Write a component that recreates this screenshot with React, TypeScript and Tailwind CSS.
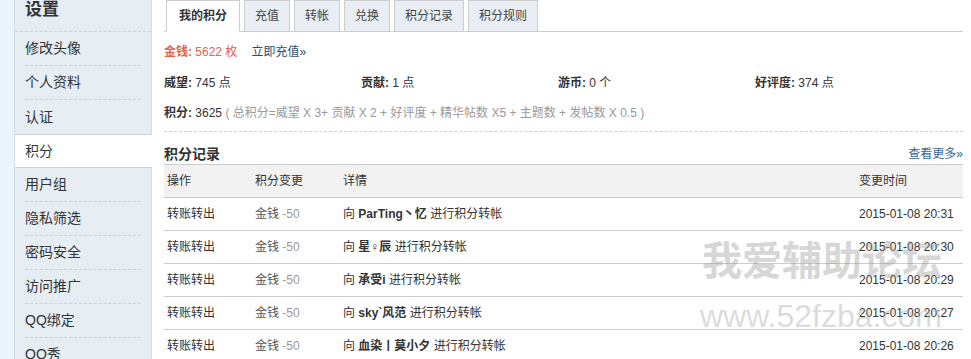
const menu = ["修改头像", "个人资料", "认证", "积分", "用户组", "隐私筛选", "密码安全", "访问推广", "QQ绑定", "QQ秀"];
const active = "积分";

const tabs = ["我的积分", "充值", "转帐", "兑换", "积分记录", "积分规则"];

const stats = [
  { label: "威望", value: "745 点" },
  { label: "贡献", value: "1 点" },
  { label: "游币", value: "0 个" },
  { label: "好评度", value: "374 点" },
];

const logs = [
  { name: "ParTing丶忆", time: "2015-01-08 20:31" },
  { name: "星♀辰", time: "2015-01-08 20:30" },
  { name: "承受i", time: "2015-01-08 20:29" },
  { name: "sky`风范", time: "2015-01-08 20:27" },
  { name: "血染丨莫小夕", time: "2015-01-08 20:26" },
];

export default function App() {
  return (
    <div className="relative flex h-[359px] w-[971px] overflow-hidden bg-[#eaf5fb] pl-[14px] font-['Liberation_Sans','Noto_Sans_CJK_SC',sans-serif] text-[#333]">
      {/* Sidebar */}
      <div className="w-[138px] shrink-0 border-l border-r border-[#d3dde5] bg-[#e6eef4]">
        <div className="h-[32px] border-b border-dashed border-[#c9d2da] pl-[10px] text-[17px] font-bold leading-[20px]">
          设置
        </div>
        {menu.map((item, i) => {
          const isActive = item === active;
          const nextActive = menu[i + 1] === active;
          if (isActive) {
            return (
              <div
                key={item}
                className="-mr-px flex h-[34px] items-center border-y border-[#cdd5dc] bg-white pl-[10px] text-[14px]"
              >
                {item}
              </div>
            );
          }
          return (
            <div key={item} className="px-[10px]">
              <div
                className={
                  "flex h-[34px] items-center text-[14px] " +
                  (nextActive ? "" : "border-b border-dashed border-[#c9d2da]")
                }
              >
                {item}
              </div>
            </div>
          );
        })}
      </div>

      {/* Main content */}
      <div className="flex-1 bg-white pl-[12px] pr-[8px] text-[12px]">
        <div className="flex gap-[4px] border-b border-[#cdcdcd] pl-[2px]">
          {tabs.map((t, i) => (
            <div
              key={t}
              className={
                i === 0
                  ? "-mb-px h-[32px] border border-[#cdcdcd] border-b-white bg-white px-[12px] text-[12px] font-bold leading-[31px]"
                  : "-mb-px h-[32px] border border-[#cdcdcd] bg-[#e8eef3] px-[10px] text-[12px] leading-[31px] text-[#444]"
              }
            >
              {t}
            </div>
          ))}
        </div>

        <div className="mt-[10px] leading-[20px]">
          <span className="text-[#e0664a]">
            <b className="font-bold">金钱:</b> 5622 枚
          </span>
          <span className="ml-[14px] text-[#2d4d6e]">立即充值»</span>
        </div>

        <div className="mt-[11px] flex leading-[20px]">
          {stats.map((s) => (
            <div key={s.label} className="w-[197px]">
              <b className="font-bold">{s.label}:</b> {s.value}
            </div>
          ))}
        </div>

        <div className="mt-[10px] leading-[20px]">
          <b className="font-bold">积分:</b> 3625{" "}
          <span className="text-[#999]">( 总积分=威望 X 3+ 贡献 X 2 + 好评度 + 精华帖数 X5 + 主题数 + 发帖数 X 0.5 )</span>
        </div>

        <div className="mt-[8px] border-b border-dashed border-[#cfcfcf]" />

        <div className="mt-[12px] flex items-center justify-between leading-[20px]">
          <span className="text-[14px] font-bold">积分记录</span>
          <span className="text-[#336699]">查看更多»</span>
        </div>

        <table className="w-full table-fixed border-collapse text-left">
          <colgroup>
            <col className="w-[88px]" />
            <col className="w-[88px]" />
            <col />
            <col className="w-[107px]" />
          </colgroup>
          <thead>
            <tr className="h-[33px] border-y border-[#cccccc] bg-[#f2f2f2]">
              <th className="pl-[3px] font-normal">操作</th>
              <th className="pl-[3px] font-normal">积分变更</th>
              <th className="pl-[3px] font-normal">详情</th>
              <th className="pl-[3px] font-normal">变更时间</th>
            </tr>
          </thead>
          <tbody>
            {logs.map((r) => (
              <tr key={r.time} className="h-[33px] border-b border-[#cccccc]">
                <td className="pl-[3px]">转账转出</td>
                <td className="pl-[3px] text-[#999]">
                  <span className="text-[#555]">金钱</span> -50
                </td>
                <td className="pl-[3px]">
                  向 <b className="font-bold">{r.name}</b> 进行积分转帐
                </td>
                <td className="pl-[3px]">{r.time}</td>
              </tr>
            ))}
          </tbody>
        </table>
      </div>

      {/* Watermark */}
      <div className="pointer-events-none absolute left-[702px] top-[241px] text-[40px] font-bold leading-[40px] text-[rgba(150,150,150,0.4)]">
        我爱辅助论坛
      </div>
      <div className="pointer-events-none absolute left-[700px] top-[300px] font-['Liberation_Sans',sans-serif] text-[32px] leading-[32px] text-[rgba(160,160,160,0.38)]">
        www.52fzba.com
      </div>
    </div>
  );
}
